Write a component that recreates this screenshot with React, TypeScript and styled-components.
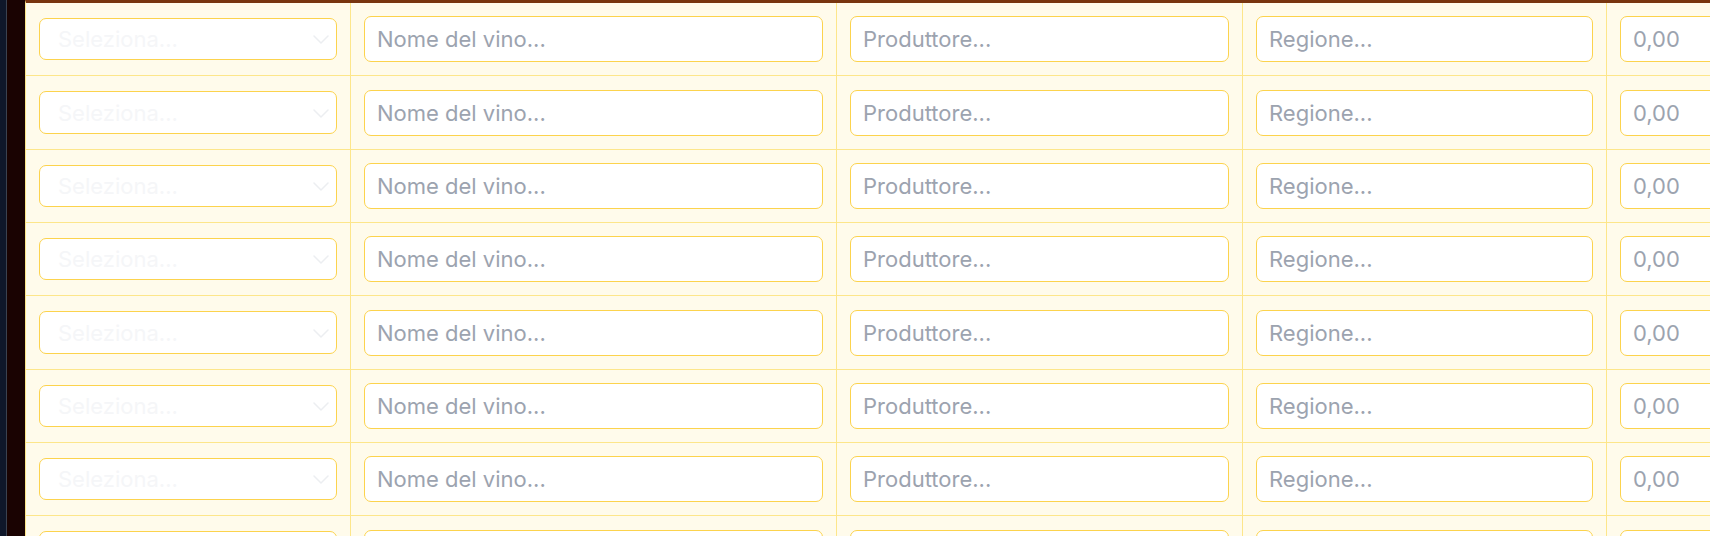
import React from "react";
import styled, { createGlobalStyle } from "styled-components";

const GlobalStyle = createGlobalStyle`
  html, body {
    margin: 0;
    padding: 0;
    background: #0f172a;
  }
  body {
    font-family: Inter, "Noto Sans", "Liberation Sans", sans-serif;
    overflow: hidden;
  }
  * { box-sizing: border-box; }
`;

const Page = styled.div`
  display: flex;
  width: 1710px;
  height: 536px;
  overflow: hidden;
`;

const NavEdge = styled.div`
  flex: 0 0 7px;
  background: #0f172a;
  border-right: 1px solid #3b4250;
`;

const DarkGutter = styled.div`
  flex: 0 0 18px;
  background: #1a0302;
`;

const TableArea = styled.div`
  flex: 1;
  min-width: 0;
  background: #fffbeb;
  border-top: 3px solid #78350f;
  border-left: 1px solid #fde68a;
  overflow: hidden;
`;

const Row = styled.div`
  display: grid;
  grid-template-columns: 325px 486px 406px 364px 200px;
  height: 73.35px;
  border-bottom: 1px solid #fde68a;
`;

const Cell = styled.div<{ $last?: boolean }>`
  display: flex;
  align-items: center;
  padding: 0 13px;
  border-right: ${(p) => (p.$last ? "none" : "1px solid #fde68a")};
  min-width: 0;
`;

const TextInput = styled.input`
  width: 100%;
  height: 46px;
  padding: 0 12px;
  border: 1px solid #fcd34d;
  border-radius: 7px;
  background: #ffffff;
  font-family: Inter, "Noto Sans", "Liberation Sans", sans-serif;
  font-size: 22px;
  color: #374151;
  outline: none;
  text-align: left;
  &::placeholder {
    color: #9ca3af;
    opacity: 1;
  }
`;

const SelectWrap = styled.div`
  position: relative;
  width: 100%;
  height: 42.5px;
`;

const Select = styled.select`
  appearance: none;
  -webkit-appearance: none;
  width: 100%;
  height: 100%;
  padding: 0 30px 0 18px;
  border: 1px solid #fcd34d;
  border-radius: 7px;
  background: #ffffff;
  font-family: Inter, "Noto Sans", "Liberation Sans", sans-serif;
  font-size: 22px;
  color: #f5f6f8;
  outline: none;
`;

const Chevron = styled.svg`
  position: absolute;
  right: 8px;
  top: 50%;
  margin-top: -4px;
  width: 16px;
  height: 9px;
  pointer-events: none;
`;

const ROWS = 8;

function WineRow() {
  return (
    <Row>
      <Cell>
        <SelectWrap>
          <Select defaultValue="">
            <option value="">Seleziona...</option>
            <option value="rosso">Rosso</option>
            <option value="bianco">Bianco</option>
          </Select>
          <Chevron viewBox="0 0 16 9" fill="none">
            <polyline
              points="1,1 8,8 15,1"
              stroke="#eceef1"
              strokeWidth="1.5"
              strokeLinecap="round"
              strokeLinejoin="round"
            />
          </Chevron>
        </SelectWrap>
      </Cell>
      <Cell>
        <TextInput placeholder="Nome del vino..." />
      </Cell>
      <Cell>
        <TextInput placeholder="Produttore..." />
      </Cell>
      <Cell>
        <TextInput placeholder="Regione..." />
      </Cell>
      <Cell $last>
        <TextInput placeholder="0,00" />
      </Cell>
    </Row>
  );
}

export default function App() {
  return (
    <>
      <GlobalStyle />
      <Page>
        <NavEdge />
        <DarkGutter />
        <TableArea>
          {Array.from({ length: ROWS }).map((_, i) => (
            <WineRow key={i} />
          ))}
        </TableArea>
      </Page>
    </>
  );
}
